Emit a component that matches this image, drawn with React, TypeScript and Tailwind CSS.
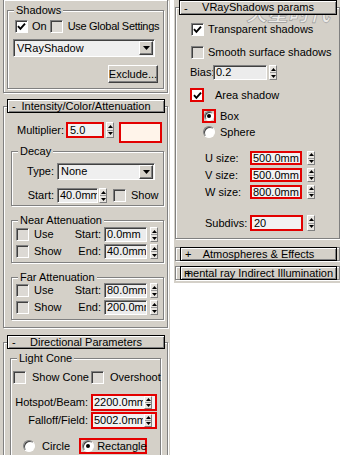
import type { ReactNode } from 'react'

const FACE = 'bg-[#d4d0c8]'
const ETCH = 'border border-[#808080] shadow-[inset_1px_1px_0_#fff,1px_1px_0_#fff]'
const SUNKEN = 'border border-t-[#808080] border-l-[#808080] border-b-white border-r-white shadow-[inset_1px_1px_0_#404040]'
const RAISED = 'border border-t-white border-l-white border-b-[#404040] border-r-[#404040] shadow-[inset_-1px_-1px_0_#808080]'
const RED = 'border-2 border-[#e30000]'

function Check({ on, red }: { on?: boolean; red?: boolean }) {
  const box = red
    ? `h-[14px] w-[14px] ${RED} bg-white`
    : `h-[13px] w-[13px] ${SUNKEN} ${on ? 'bg-white' : 'bg-[#dcd9d4]'}`
  return (
    <span className={`flex shrink-0 items-center justify-center ${box}`}>
      {on && (
        <svg width="9" height="9" viewBox="0 0 9 9">
          <path d="M1 4.2 3.4 6.8 8 1.6" fill="none" stroke="#000" strokeWidth="1.9" />
        </svg>
      )}
    </span>
  )
}

function Radio({ on, small }: { on?: boolean; small?: boolean }) {
  return (
    <span
      className={`flex shrink-0 items-center justify-center rounded-full border border-t-[#808080] border-l-[#808080] border-b-white border-r-white bg-white shadow-[inset_1px_1px_0_#404040] ${small ? 'h-[10px] w-[10px]' : 'h-[12px] w-[12px]'}`}
    >
      {on && <span className="h-[4px] w-[4px] rounded-full bg-black" />}
    </span>
  )
}

// up/down spinner: one light raised box, split in two
function Spin({ className = 'h-[15px]' }: { className?: string }) {
  return (
    <span className={`flex w-[8px] shrink-0 flex-col border border-t-white border-l-white border-b-[#808080] border-r-[#808080] bg-[#e8e5e0] ${className}`}>
      <span className="flex flex-1 items-center justify-center border-b border-[#9a9a9a]">
        <svg width="5" height="3" viewBox="0 0 5 3"><path d="M2.5 0 5 3H0z" /></svg>
      </span>
      <span className="flex flex-1 items-center justify-center">
        <svg width="5" height="3" viewBox="0 0 5 3"><path d="M0 0h5L2.5 3z" /></svg>
      </span>
    </span>
  )
}

function Field({ value, className }: { value: string; className: string }) {
  return (
    <span className={`flex shrink-0 items-center overflow-hidden whitespace-nowrap pl-[2px] leading-none bg-[#ececec] ${SUNKEN} ${className}`}>
      {value}
    </span>
  )
}

function RedField({ value, className }: { value: string; className: string }) {
  return (
    <span className={`flex shrink-0 items-center overflow-hidden whitespace-nowrap pl-[1px] leading-none bg-[#f2f2f2] ${RED} ${className}`}>
      {value}
    </span>
  )
}

function Drop({ value, className }: { value: string; className: string }) {
  return (
    <span className={`flex shrink-0 items-center bg-[#efefef] ${SUNKEN} ${className}`}>
      <span className="flex-1 pl-[3px] leading-none">{value}</span>
      <span className={`mr-[1px] flex h-[14px] w-[14px] items-center justify-center ${FACE} ${RAISED}`}>
        <svg width="7" height="4" viewBox="0 0 7 4"><path d="M0 0h7L3.5 4z" /></svg>
      </span>
    </span>
  )
}

function Head({ sign, title, className }: { sign: string; title: string; className: string }) {
  return (
    <div className={`relative z-10 flex items-center justify-center border border-black ${FACE} shadow-[inset_1px_1px_0_#fff,inset_-1px_-1px_0_#808080] ${className}`}>
      <span className="absolute left-[4px] top-1/2 -translate-y-1/2 leading-none">{sign}</span>
      <span className="whitespace-nowrap leading-none">{title}</span>
    </div>
  )
}

function Group({ label, className, children }: { label: string; className: string; children: ReactNode }) {
  return (
    <div className={`relative ${ETCH} ${className}`}>
      <span className={`absolute -top-[7px] left-[6px] whitespace-nowrap px-[2px] leading-[12px] ${FACE}`}>{label}</span>
      {children}
    </div>
  )
}

function AttRow({ check, label, value }: { check: string; label: string; value: string }) {
  return (
    <div className="flex h-[15px] items-center">
      <span className="ml-[4px]"><Check /></span>
      <span className="ml-[5px] w-[40px]">{check}</span>
      <span className="w-[27px] text-right">{label}</span>
      <Field value={value} className="ml-[3px] h-[15px] w-[43px]" />
      <span className="ml-[3px]"><Spin /></span>
    </div>
  )
}

function SizeRow({ label, value, className }: { label: string; value: string; className: string }) {
  return (
    <div className={`ml-[29px] flex items-center ${className}`}>
      <span className="w-[45px]">{label}</span>
      <RedField value={value} className="h-full w-[52px]" />
      <span className="ml-[5px]"><Spin className="h-[14px]" /></span>
    </div>
  )
}

export default function App() {
  return (
    <div className="flex h-[455px] w-[342px] overflow-hidden bg-white font-['Liberation_Sans',Arial,sans-serif] text-[11px] text-black">
      {/* left column */}
      <div className={`h-full w-[170px] shrink-0 ${FACE}`}>
        <div className={`ml-[3px] h-[93px] w-[165px] border-t-0 pt-[10px] ${ETCH}`}>
          <Group label="Shadows" className="ml-[3px] w-[157px] pb-[5px]">
            <div className="ml-[7px] mt-[9px] flex h-[13px] items-center">
              <Check on />
              <span className="ml-[4px]">On</span>
              <span className="ml-[3px]"><Check /></span>
              <span className="ml-[5px] whitespace-nowrap tracking-[-0.3px]">Use Global Settings</span>
            </div>
            <Drop value="VRayShadow" className="ml-[5px] mt-[6px] h-[18px] w-[142px]" />
            <div className={`ml-auto mr-[5px] mt-[8px] flex h-[18px] w-[50px] items-center justify-center ${RAISED}`}>
              Exclude...
            </div>
          </Group>
        </div>

        <div className="ml-[3px] mt-[6px] w-[165px]">
          <Head sign="-" title="Intensity/Color/Attenuation" className="ml-[4px] h-[14px] w-[158px]" />
          <div className={`-mt-[7px] h-[222px] ${ETCH}`}>
            <div className="ml-[13px] mt-[15px] flex items-start">
              <span className="w-[49px] leading-[16px]">Multiplier:</span>
              <RedField value="5.0" className="h-[16px] w-[38px] pl-[2px]" />
              <span className="ml-[2px]"><Spin className="h-[16px]" /></span>
              <span className={`ml-[5px] h-[21px] w-[43px] bg-[#fff4ea] ${RED}`} />
            </div>

            <Group label="Decay" className="ml-[7px] mt-[8px] w-[153px] pb-[2px]">
              <div className="mt-[11px] flex items-center">
                <span className="w-[45px] pr-[3px] text-right">Type:</span>
                <Drop value="None" className="h-[17px] w-[98px]" />
              </div>
              <div className="mt-[8px] flex h-[15px] items-center">
                <span className="w-[45px] pr-[3px] text-right">Start:</span>
                <Field value="40.0mm" className="h-[15px] w-[41px]" />
                <span className="ml-[1px]"><Spin /></span>
                <span className="ml-[6px]"><Check /></span>
                <span className="ml-[5px]">Show</span>
              </div>
            </Group>

            <Group label="Near Attenuation" className="ml-[7px] mt-[14px] w-[153px] pb-[3px]">
              <div className="mt-[6px]">
                <AttRow check="Use" label="Start:" value="0.0mm" />
              </div>
              <div className="mt-[2px]">
                <AttRow check="Show" label="End:" value="40.0mm" />
              </div>
            </Group>

            <Group label="Far Attenuation" className="ml-[7px] mt-[14px] w-[153px] pb-[4px]">
              <div className="mt-[5px]">
                <AttRow check="Use" label="Start:" value="80.0mm" />
              </div>
              <div className="mt-[2px]">
                <AttRow check="Show" label="End:" value="200.0mm" />
              </div>
            </Group>
          </div>
        </div>

        <div className="ml-[3px] mt-[7px] w-[165px]">
          <Head sign="-" title="Directional Parameters" className="ml-[4px] h-[14px] w-[158px]" />
          <div className={`-mt-[7px] h-[130px] ${ETCH}`}>
            <Group label="Light Cone" className="ml-[6px] mt-[15px] h-[120px] w-[151px]">
              <div className="mt-[12px] flex h-[13px] items-center">
                <span className="ml-[2px]"><Check /></span>
                <span className="ml-[6px] w-[57px] shrink-0 whitespace-nowrap">Show Cone</span>
                <span className="ml-[2px]"><Check /></span>
                <span className="ml-[6px] whitespace-nowrap">Overshoot</span>
              </div>
              {[
                ['Hotspot/Beam:', '2200.0mm', 'mt-[10px]'],
                ['Falloff/Field:', '5002.0mm', 'mt-[1px]'],
              ].map(([label, value, gap]) => (
                <div key={label} className={`flex items-center ${gap}`}>
                  <span className="w-[80px] whitespace-nowrap pr-[3px] text-right">{label}</span>
                  <span className={`flex h-[17px] w-[66px] items-center bg-[#f2f2f2] ${RED}`}>
                    <span className="w-[50px] overflow-hidden whitespace-nowrap pl-[1px] leading-none">{value}</span>
                    <span className="ml-[1px]"><Spin className="h-[13px]" /></span>
                  </span>
                </div>
              ))}
              <div className="mt-[9px] flex h-[16px] items-center">
                <span className="ml-[12px]"><Radio /></span>
                <span className="ml-[7px]">Circle</span>
                <span className={`ml-[9px] flex h-[16px] w-[68px] items-center ${RED}`}>
                  <span className="ml-[1px]"><Radio on /></span>
                  <span className="ml-[3px]">Rectangle</span>
                </span>
              </div>
            </Group>
          </div>
        </div>
      </div>

      {/* right column */}
      <div className={`relative ml-[4px] h-[283px] w-[166px] shrink-0 ${FACE}`}>
        <div className="ml-[1px] w-[165px]">
          <Head sign="-" title="VRayShadows params" className="ml-[4px] h-[15px] w-[158px]" />
          <div className={`-mt-[8px] h-[232px] ${ETCH}`}>
            <div className="ml-[15px] mt-[15px] flex h-[13px] items-center">
              <Check on />
              <span className="ml-[4px]">Transparent shadows</span>
            </div>
            <div className="ml-[15px] mt-[10px] flex h-[13px] items-center">
              <Check />
              <span className="ml-[4px]">Smooth surface shadows</span>
            </div>
            <div className="ml-[14px] mt-[6px] flex h-[15px] items-center">
              <span className="w-[23px]">Bias:</span>
              <Field value="0.2" className="h-[15px] w-[54px]" />
              <span className="ml-[2px]"><Spin /></span>
            </div>
            <div className="ml-[14px] mt-[8px] flex h-[14px] items-center">
              <Check on red />
              <span className="ml-[11px]">Area shadow</span>
            </div>
            <div className="ml-[26px] mt-[7px] flex h-[14px] items-center">
              <span className={`flex h-[14px] w-[14px] items-center justify-center ${RED}`}>
                <Radio on small />
              </span>
              <span className="ml-[4px]">Box</span>
            </div>
            <div className="ml-[27px] mt-[3px] flex h-[12px] items-center">
              <Radio />
              <span className="ml-[5px]">Sphere</span>
            </div>
            <SizeRow label="U size:" value="500.0mm" className="mt-[13px] h-[14px]" />
            <SizeRow label="V size:" value="500.0mm" className="mt-[3px] h-[14px]" />
            <SizeRow label="W size:" value="800.0mm" className="mt-[3px] h-[14px]" />
            <div className="ml-[29px] mt-[16px] flex h-[16px] items-center">
              <span className="w-[45px]">Subdivs:</span>
              <RedField value="20" className="h-[16px] w-[53px] pl-[2px]" />
              <span className="ml-[4px]"><Spin className="h-[16px]" /></span>
            </div>
          </div>
        </div>

        <div className={`ml-[1px] mt-[8px] h-[14px] w-[165px] ${ETCH}`}>
          <Head sign="+" title="Atmospheres & Effects" className="-my-[1px] ml-[4px] h-[14px] w-[157px]" />
        </div>
        <div className={`ml-[1px] mt-[5px] h-[14px] w-[165px] ${ETCH}`}>
          <Head sign="+" title="mental ray Indirect Illumination" className="-my-[1px] ml-[4px] h-[14px] w-[157px]" />
        </div>

        <span className="pointer-events-none absolute left-[72px] top-[2px] whitespace-nowrap font-['Noto_Sans_CJK_SC',sans-serif] text-[21px] font-bold italic leading-none text-white/60 [-webkit-text-stroke:0.6px_#9a9a9a]">
          火星时代
        </span>
      </div>
    </div>
  )
}
